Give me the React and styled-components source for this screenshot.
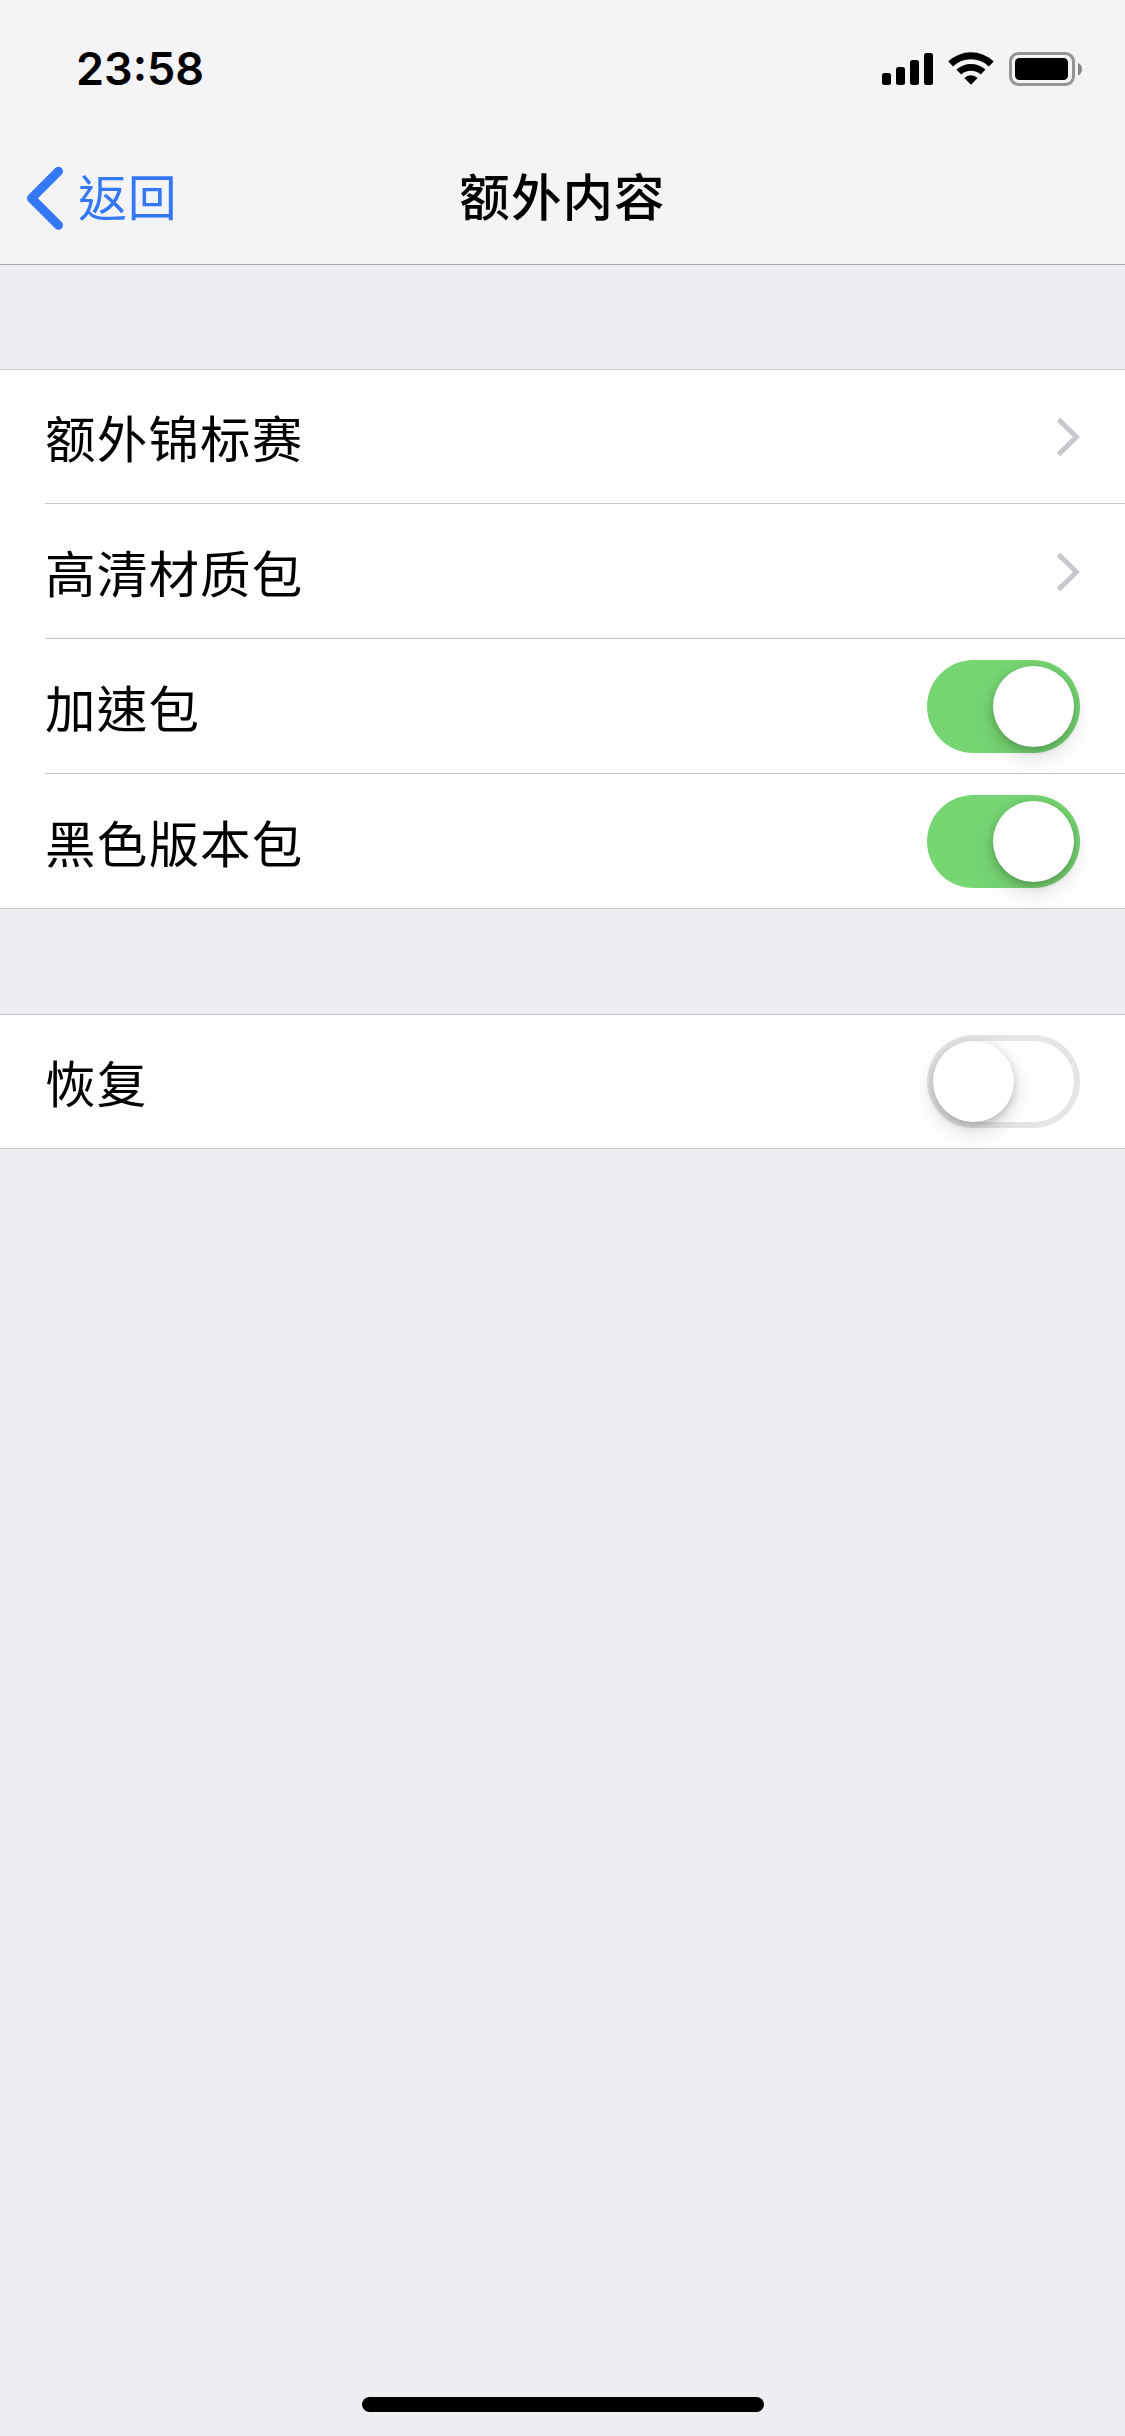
import React, { useState } from 'react';
import styled, { createGlobalStyle } from 'styled-components';

const GlobalStyle = createGlobalStyle`
  * { box-sizing: border-box; }
  body {
    margin: 0;
    background: #eeedf2;
    font-family: "Noto Sans CJK TC", "Noto Sans CJK SC", sans-serif;
    color: #000;
  }
`;

const Screen = styled.div`
  width: 1125px;
  height: 2436px;
  display: flex;
  flex-direction: column;
  overflow: hidden;
  background: #eeedf2;
`;

const Header = styled.header`
  height: 265px;
  flex: none;
  background: #f4f4f7;
  border-bottom: 1px solid #a8a7ac;
`;

const StatusBar = styled.div`
  height: 132px;
  padding: 6px 42px 0 76px;
  display: flex;
  align-items: center;
  justify-content: space-between;
`;

const Clock = styled.time`
  font: 600 45px/60px Inter, sans-serif;
`;

const NavBar = styled.nav`
  height: 132px;
  display: grid;
  grid-template-columns: 1fr auto 1fr;
  align-items: center;
`;

const BackButton = styled.button`
  display: flex;
  align-items: center;
  gap: 14px;
  padding: 0 0 0 26px;
  border: 0;
  background: none;
  color: #3478f6;
  font: 400 49px/76px "Noto Sans CJK TC", sans-serif;
  letter-spacing: 0.8px;
`;

const BackLabel = styled.span`
  padding-bottom: 6px;
`;

const Title = styled.h1`
  margin: 0;
  padding-bottom: 8px;
  font-size: 50.5px;
  line-height: 76px;
  font-weight: 500;
  letter-spacing: 1.1px;
`;

const Settings = styled.main`
  flex: 1;
  padding-top: 104px;
  display: flex;
  flex-direction: column;
  gap: 105px;
`;

const Group = styled.section`
  background: #fff;
  border-top: 1px solid #c8c7cc;
  border-bottom: 1px solid #c8c7cc;
`;

const Row = styled.div`
  height: 133px;
  margin-left: 45px;
  padding-right: 45px;
  display: flex;
  align-items: center;
  justify-content: space-between;

  & + & {
    height: 135px;
    padding-top: 1px;
    border-top: 1px solid #c8c7cc;
  }
`;

const Label = styled.span`
  padding-bottom: 2px;
  font-size: 50.5px;
  font-weight: 400;
  line-height: 76px;
  letter-spacing: 1.2px;
`;

const Track = styled.button`
  width: 153px;
  height: 93px;
  padding: 6px;
  border: 0;
  border-radius: 47px;
  display: flex;
  justify-content: ${({ $on }) => ($on ? 'flex-end' : 'flex-start')};
  background: ${({ $on }) => ($on ? '#76d672' : '#fff')};
  box-shadow: ${({ $on }) => ($on ? 'none' : 'inset 0 0 0 6px #e5e5e5')};
`;

const Knob = styled.span`
  width: 81px;
  height: 81px;
  border-radius: 50%;
  background: #fff;
  box-shadow: 0 9px 24px rgba(0, 0, 0, 0.15), 0 3px 9px rgba(0, 0, 0, 0.2);
`;

const HomeArea = styled.footer`
  height: 39px;
  display: flex;
  justify-content: center;
`;

const HomeIndicator = styled.div`
  width: 402px;
  height: 15px;
  margin-left: 1px;
  border-radius: 8px;
  background: #000;
`;

const StatusIcons = () => (
  <svg width="202" height="36" viewBox="881 51 202 36" aria-hidden="true">
    <rect x="882" y="73" width="9" height="12" rx="2.5" />
    <rect x="896" y="67" width="9" height="18" rx="2.5" />
    <rect x="910" y="60" width="9" height="25" rx="2.5" />
    <rect x="924" y="53" width="9" height="32" rx="2.5" />
    <path d="M948.3 61.3a33 33 0 0 1 45.4 0.2l-4.8 4.9a26 26 0 0 0-35.9 0z" />
    <path d="M956.4 69.6a21.5 21.5 0 0 1 29.1 0l-4.8 4.8a14.6 14.6 0 0 0-19.5 0z" />
    <path d="M964.3 77.9a10 10 0 0 1 13.3 0l-6.6 6.9z" />
    <rect x="1010.5" y="53.5" width="63" height="31" rx="8" fill="none" stroke="#949496" strokeWidth="3" />
    <rect x="1015" y="58" width="53" height="22" rx="4.5" />
    <path d="M1078 63c5.3 2 5.3 10.300 0 12.500z" fill="#858587" />
  </svg>
);

const BackChevron = () => (
  <svg width="38" height="64" viewBox="26 166 38 64" fill="none" aria-hidden="true">
    <path d="M58.500 171.200L31.500 198.200L58.500 225.200" stroke="currentColor" strokeWidth="9" strokeLinecap="round" strokeLinejoin="round" />
  </svg>
);

const Disclosure = () => (
  <svg width="24" height="40" viewBox="0 0 24 40" fill="none" aria-hidden="true">
    <path d="M2.500 2.500L20.500 20L2.500 37.500" stroke="#c7c7cc" strokeWidth="5" />
  </svg>
);

function Switch({ label, initial }) {
  const [on, setOn] = useState(initial);
  return (
    <Track $on={on} role="switch" aria-checked={on} aria-label={label} onClick={() => setOn(!on)}>
      <Knob />
    </Track>
  );
}

const groups = [
  [
    { label: '额外锦标赛', kind: 'link' },
    { label: '高清材质包', kind: 'link' },
    { label: '加速包', kind: 'switch', on: true },
    { label: '黑色版本包', kind: 'switch', on: true },
  ],
  [{ label: '恢复', kind: 'switch', on: false }],
];

export default function App() {
  return (
    <Screen lang="zh-Hant">
      <GlobalStyle />
      <Header>
        <StatusBar>
          <Clock>23:58</Clock>
          <StatusIcons />
        </StatusBar>
        <NavBar>
          <BackButton>
            <BackChevron />
            <BackLabel>返回</BackLabel>
          </BackButton>
          <Title>额外内容</Title>
        </NavBar>
      </Header>
      <Settings>
        {groups.map((rows, i) => (
          <Group key={i}>
            {rows.map((row) => (
              <Row key={row.label}>
                <Label>{row.label}</Label>
                {row.kind === 'switch' ? <Switch label={row.label} initial={row.on} /> : <Disclosure />}
              </Row>
            ))}
          </Group>
        ))}
      </Settings>
      <HomeArea>
        <HomeIndicator />
      </HomeArea>
    </Screen>
  );
}
